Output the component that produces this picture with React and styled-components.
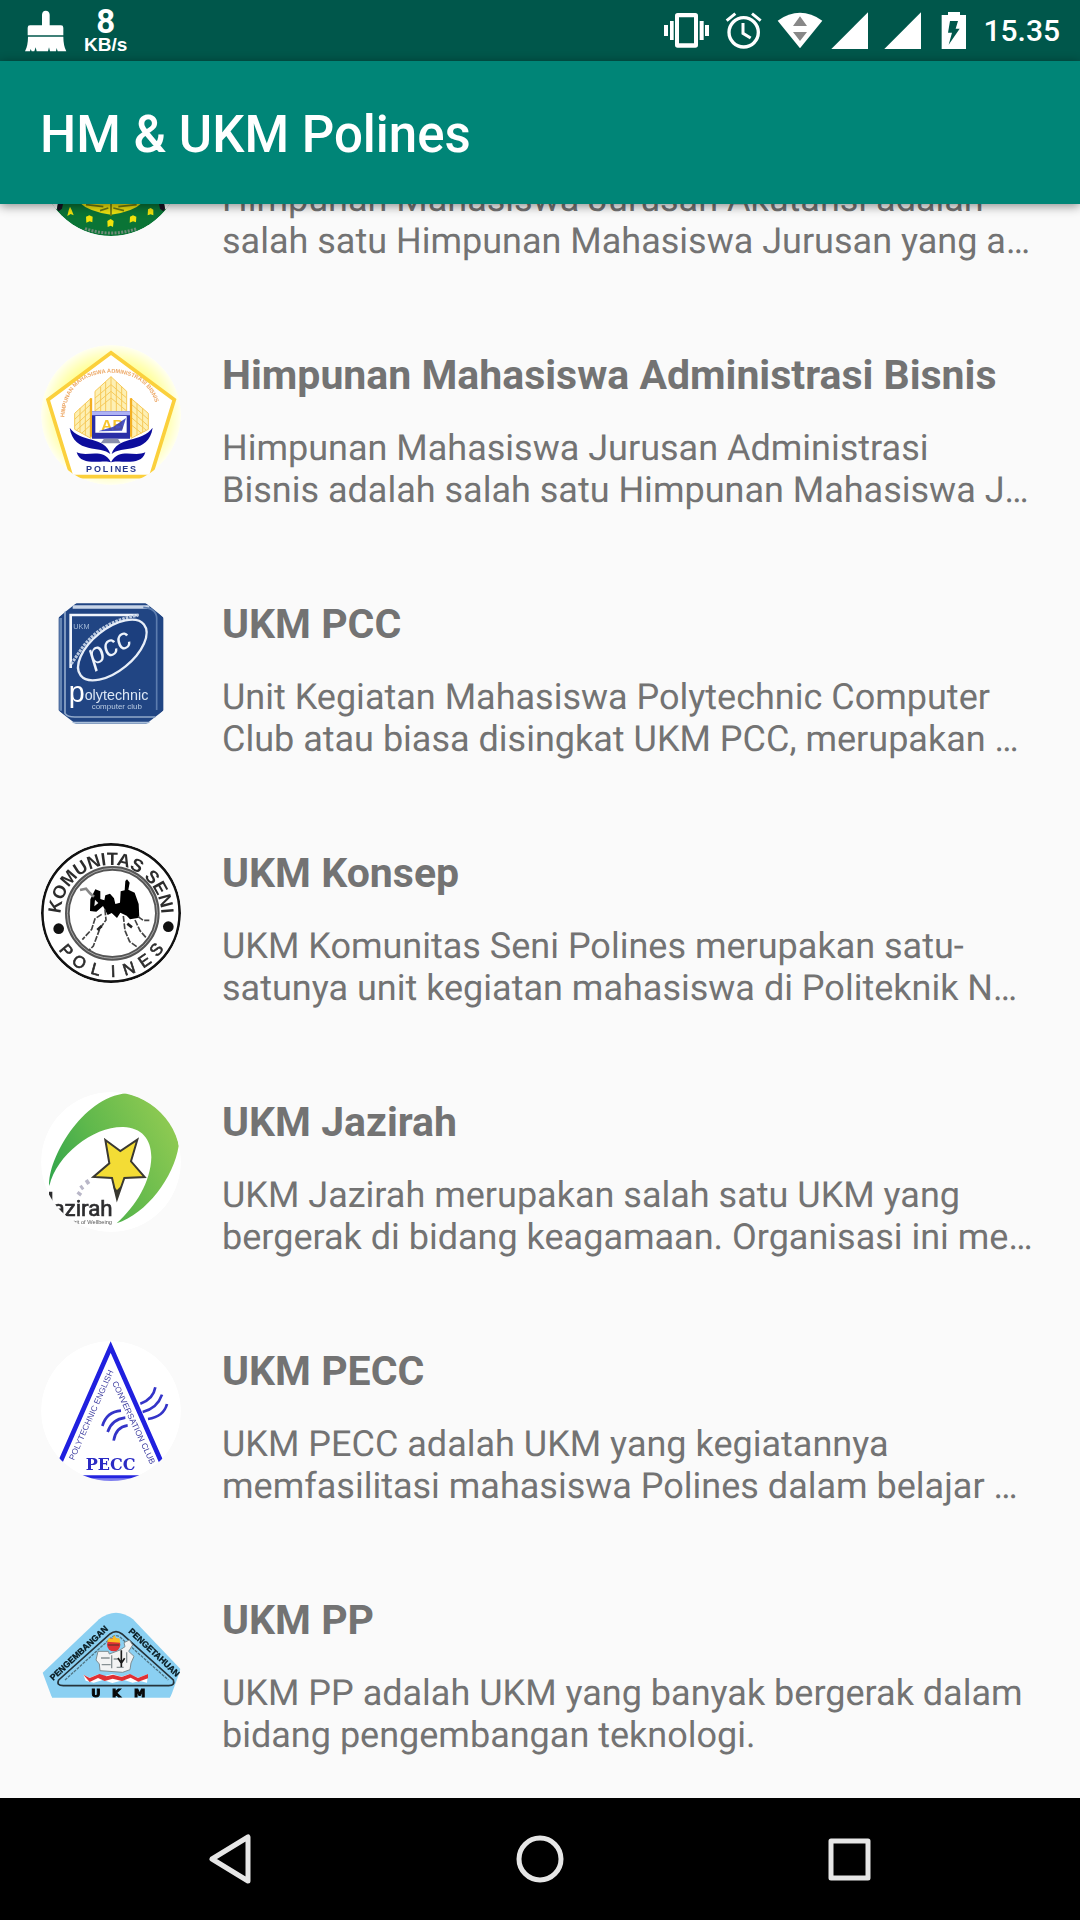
import React from "react";
import styled, { createGlobalStyle } from "styled-components";

const GlobalStyle = createGlobalStyle`
  * { box-sizing: border-box; }
  body {
    margin: 0;
    background: #fafafa;
    font-family: Roboto, "Noto Sans", sans-serif;
  }
`;

const Screen = styled.div`
  display: flex;
  flex-direction: column;
  height: 100vh;
`;

const StatusBar = styled.div`
  display: flex;
  flex: none;
  align-items: center;
  justify-content: space-between;
  height: 61px;
  padding: 0 20px 0 24px;
  background: #00574b;
  color: #fff;
`;

const StatusGroup = styled.div`
  display: flex;
  align-items: center;
  gap: ${(p) => p.$gap}px;
`;

const StatusIcon = styled.svg`
  display: block;
  width: ${(p) => p.$width}px;
  height: 61px;
  fill: #fff;
`;

const NetSpeed = styled.div`
  display: flex;
  flex-direction: column;
  align-items: center;
`;

const SpeedValue = styled.span`
  font-size: 33px;
  font-weight: 700;
  line-height: 28px;
`;

const SpeedUnit = styled.span`
  font-family: "Liberation Sans", sans-serif;
  font-size: 19px;
  font-weight: 700;
  line-height: 18px;
`;

const Clock = styled.time`
  font-size: 30px;
  font-weight: 500;
  line-height: 42px;
`;

const AppBar = styled.header`
  display: flex;
  flex: none;
  align-items: center;
  height: 143px;
  padding: 4px 40px 0;
  background: #008577;
  color: #fff;
  box-shadow: 0 2px 10px rgba(0, 0, 0, 0.45);
  z-index: 1;
`;

const AppTitle = styled.h1`
  margin: 0;
  font-size: 51px;
  font-weight: 500;
  line-height: 60px;
`;

const Viewport = styled.main`
  display: flex;
  flex: 1;
  flex-direction: column;
  justify-content: flex-end;
  min-height: 0;
  overflow: hidden;
`;

const List = styled.ul`
  flex: none;
  margin: 0;
  padding: 0;
  list-style: none;
`;

const Row = styled.li`
  display: flex;
  gap: 41px;
  min-height: 249px;
  padding: 41px 41px 42px;
`;

const Avatar = styled.svg`
  flex: none;
  width: 140px;
  height: 140px;
  border-radius: 50%;
  filter: blur(0.6px);
`;

const RowText = styled.div`
  display: flex;
  flex: 1;
  flex-direction: column;
  justify-content: flex-end;
  gap: 22px;
  min-width: 0;
  color: #737373;
`;

const RowTitle = styled.h2`
  margin: 0;
  font-size: 41px;
  font-weight: 700;
  line-height: 60px;
`;

const RowBody = styled.p`
  margin: 0;
  font-size: 36px;
  line-height: 42px;
  text-rendering: geometricPrecision;
  white-space: pre-line;
`;

const NavBar = styled.nav`
  display: flex;
  flex: none;
  height: 122px;
  padding: 0 75px;
  background: #000;
`;

const NavButton = styled.button`
  display: flex;
  flex: 1;
  align-items: center;
  justify-content: center;
  padding: 0;
  border: 0;
  background: transparent;
`;

const NavIcon = styled.svg`
  width: 56px;
  height: 56px;
  fill: none;
  stroke: #e6e6e6;
  stroke-width: 5;
  stroke-linejoin: round;
`;

function AkuntansiLogo() {
  return (
    <Avatar viewBox="-27 -300 420 420" aria-hidden="true">
      <circle cx="183" cy="-90" r="210" fill="#0a7436" />
      <path d="M-27 0 H28 L21 38 L-10 48 Z M393 0 H338 L345 38 L376 48 Z" fill="#fafafa" />
      <path d="M28 0 H44 L36 38 L26 46 L21 38 Z M338 0 H322 L330 38 L340 46 L345 38 Z" fill="#1a1022" />
      <path d="M72 0 Q100 46 183 56 Q266 46 294 0 Z" fill="#e9e010" />
      <path d="M108 26 L160 32 M205 32 L260 26 M150 44 L175 36 M190 36 L222 44 M183 24 V60" stroke="#6d7a12" strokeWidth="5" />
      <g fill="#f0e30c">
        <path d="M60 32 l5 10 6 16 -9 -4 -10 6 4 -17z" />
        <path d="M108 62 l10 -4 10 4 -1 17 -8 -3 -10 4z" />
        <path d="M172 75 l10 -6 9 6 -2 18 -7 -4 -9 4z" />
        <path d="M240 62 l9 -4 10 4 -1 17 -9 -3 -10 4z" />
        <path d="M294 40 l8 -4 8 5 0 17 -8 -3 -9 3z" />
      </g>
      <path d="M105 98 Q183 124 261 98" fill="none" stroke="#6f8a78" strokeWidth="9" strokeDasharray="6 4" />
    </Avatar>
  );
}

function BisnisLogo() {
  return (
    <Avatar viewBox="33 45 420 420" aria-hidden="true">
      <defs>
        <radialGradient id="bisnisGlow">
          <stop offset="0.75" stopColor="#ffff9c" />
          <stop offset="1" stopColor="#fffff0" />
        </radialGradient>
        <path id="bisnisArc" d="M103 262 Q112 132 243 128 Q374 132 386 268" />
      </defs>
      <circle cx="243" cy="255" r="210" fill="url(#bisnisGlow)" />
      <path d="M243 68 L433 209 L362 440 H125 L54 209 Z" fill="#fff" stroke="#fbd03c" strokeWidth="11" />
      <text fontFamily="Liberation Sans, sans-serif" fontSize="17" fontWeight="700" fill="#eda866">
        <textPath href="#bisnisArc">HIMPUNAN MAHASISWA ADMINISTRASI BISNIS</textPath>
      </text>
      <g fill="#fdf0b4" stroke="#f6c95a" strokeWidth="3">
        <path d="M243 140 L290 184 V245 H195 V184 Z" />
        <path d="M183 205 V325 L134 298 V250 Z" />
        <path d="M303 205 V325 L355 298 V250 Z" />
        <path d="M243 140 V245 M195 204 L243 164 L290 204 M195 224 L243 184 L290 224 M195 243 L243 204 L290 243 M212 170 V245 M227 156 V245 M259 156 V245 M275 170 V245" />
        <path d="M134 268 L183 222 M134 288 L183 242 M140 300 L183 262 M155 310 L183 284 M150 234 V306 M166 220 V316 M355 268 L303 222 M355 288 L303 242 M348 300 L303 262 M335 310 L303 284 M338 234 V306 M321 220 V316" />
      </g>
      <path d="M183 205 V320 M303 205 V320" stroke="#f3b024" strokeWidth="7" />
      <path d="M186 244 H300 V326 H186 Z" fill="#2a2ea6" />
      <path d="M186 244 H300 V256 H186 Z" fill="#aeb2f5" />
      <path d="M196 258 H290 V308 H196 Z" fill="#fff" />
      <text x="214" y="301" fontFamily="Liberation Sans, sans-serif" fontSize="46" fontWeight="700" fill="#f7c52c">AB</text>
      <path d="M205 304 L250 290 L288 264 L276 302 Z" fill="#2a35b8" opacity="0.85" />
      <path d="M222 326 H264 L272 340 H212 Z" fill="#8a8fac" />
      <g fill="#0d0d9c">
        <path d="M119 293 C150 338 226 318 241 372 C215 346 132 374 119 293 Z" />
        <path d="M368 293 C336 338 260 318 245 372 C271 346 356 374 368 293 Z" />
        <path d="M140 367 C172 382 220 352 243 397 C220 388 152 412 140 367 Z" />
        <path d="M346 367 C314 382 266 352 243 397 C266 388 334 412 346 367 Z" />
      </g>
      <text x="168 192 218 241 254 277 300" y="426" fontFamily="Liberation Sans, sans-serif" fontSize="27" fontWeight="700" fill="#24368c">POLINES</text>
    </Avatar>
  );
}

function PccLogo() {
  return (
    <Avatar viewBox="33 42 420 420" aria-hidden="true">
      <path d="M138 70 H348 L400 112 V392 L348 432 H138 L86 392 V112 Z" fill="#214583" />
      <path d="M128 81 H358" stroke="#c8d5e8" strokeWidth="10" />
      <path d="M92 114 V392" stroke="#6686b3" strokeWidth="8" />
      <path d="M105 92 V400 Q112 411 134 411 H376" fill="none" stroke="#91a9ca" strokeWidth="5" />
      <path d="M340 82 Q379 85 380 114 V390" fill="none" stroke="#5c7cae" strokeWidth="5" />
      <path d="M125 428 H360" stroke="#aabfd9" strokeWidth="6" />
      <path d="M122 264 V105 H326" fill="none" stroke="#f2f6fc" strokeWidth="8" />
      <path d="M124 252 L154 207 Q212 124 324 106" fill="none" stroke="#bac9df" strokeWidth="9" strokeDasharray="8 3" />
      <ellipse cx="247" cy="210" rx="122" ry="63" transform="rotate(-39 247 210)" fill="#1c3f7e" stroke="#e7eef8" strokeWidth="7" />
      <text x="190" y="258" transform="rotate(-28 190 258)" fontFamily="Liberation Sans, sans-serif" fontSize="88" fontStyle="italic" fill="#edf3fb">pcc</text>
      <text x="130" y="148" fontFamily="Liberation Sans, sans-serif" fontSize="22" fill="#a5bbd8">UKM</text>
      <text x="116" y="366" fontFamily="Liberation Sans, sans-serif" fontSize="86" fill="#fff">p</text>
      <text x="164" y="361" fontFamily="Liberation Sans, sans-serif" fontSize="43" fill="#dce7f5">olytechnic</text>
      <text x="185" y="388" fontFamily="Liberation Sans, sans-serif" fontSize="24" fill="#b8cae1">computer club</text>
    </Avatar>
  );
}

const konsepBottomLetters = [
  ["P", 50],
  ["O", 33],
  ["L", 15],
  ["I", -2],
  ["N", -18],
  ["E", -35],
  ["S", -51],
];

function KonsepLogo() {
  return (
    <Avatar viewBox="33 39 420 420" aria-hidden="true">
      <defs>
        <path id="konsepTop" d="M92 256 A151 151 0 1 1 394 256" />
      </defs>
      <circle cx="243" cy="249" r="206" fill="#fff" stroke="#111" strokeWidth="8" />
      <circle cx="247" cy="250" r="135" fill="none" stroke="#555" strokeWidth="14" />
      <circle cx="247" cy="250" r="135" fill="none" stroke="#aaa" strokeWidth="3" />
      <g fontFamily="Liberation Sans, sans-serif" fill="#2c2c2c" textAnchor="middle">
        <text fontSize="54" fontWeight="700"><textPath href="#konsepTop" startOffset="50%">KOMUNITAS SENI</textPath></text>
        {konsepBottomLetters.map(([letter, angle]) => (
          <text key={letter} x="243" y="441" fontSize="50" stroke="#2c2c2c" strokeWidth="2" transform={`rotate(${angle} 243 249)`}>
            {letter}
          </text>
        ))}
      </g>
      <circle cx="86" cy="296" r="16" fill="#111" />
      <circle cx="415" cy="290" r="16" fill="#111" />
      <path d="M181 208 L196 178 L211 184 L211 207 L223 211 L226 196 L240 191 L252 205 L256 222 L270 218 L272 184 L284 181 L286 153 L291 148 L299 158 L295 179 L314 188 L326 222 L328 263 L300 268 L290 257 L271 248 L261 264 L245 249 L233 255 L219 228 L199 245 L180 243 Z" fill="#000" />
      <path d="M195 209 L205 219 L193 229 Z" fill="#eee" />
      <path d="M225 238 L228 270 L210 295 L190 348 L176 362 M215 253 L195 266 L185 298 L157 329 M280 258 L285 302 L299 335 L320 350 M315 270 L330 302 L350 325 M324 260 L340 271 H358" fill="none" stroke="#444" strokeWidth="5" strokeDasharray="18 4" />
      <path d="M215 288 L202 300 M292 281 L306 292" stroke="#222" strokeWidth="8" />
      <path d="M150 180 L168 176 L180 190 L192 200" fill="none" stroke="#888" strokeWidth="8" />
    </Avatar>
  );
}

function JazirahLogo() {
  return (
    <Avatar viewBox="33 36 420 420" aria-hidden="true">
      <defs>
        <linearGradient id="jazirahLeaf" x1="55" y1="320" x2="430" y2="130" gradientUnits="userSpaceOnUse">
          <stop offset="0" stopColor="#2fa44c" />
          <stop offset="0.45" stopColor="#5fb84c" />
          <stop offset="1" stopColor="#8fca52" />
        </linearGradient>
      </defs>
      <circle cx="243" cy="246" r="210" fill="#fff" />
      <path d="M58 318 C52 240 155 52 290 40 C350 52 438 112 446 198 C432 290 350 402 260 430 C318 378 362 306 364 232 C364 176 334 143 280 141 C190 139 80 224 58 318 Z" fill="url(#jazirahLeaf)" />
      <path d="M226 180 L271 213 L322 179 L303 244 L344 291 L283 294 L261 357 L246 294 L190 291 L238 250 Z" fill="#f3dc35" stroke="#3a3932" strokeWidth="6" />
      <path d="M249 318 L261 357 L273 318 L261 330 Z" fill="#38372f" />
      <path d="M145 345 L151 337 M152 325 L159 320 M168 309 L177 303" stroke="#b9b7c8" strokeWidth="14" />
      <path d="M62 335 V362" stroke="#2d2d2f" strokeWidth="10" />
      <text x="248" y="409" textAnchor="end" fontFamily="Roboto, sans-serif" fontSize="67" fill="#2d2d2f" stroke="#2d2d2f" strokeWidth="2">azirah</text>
      <text x="246" y="433" textAnchor="end" fontFamily="Liberation Sans, sans-serif" fontSize="17" fill="#555">Spirit of Wellbeing</text>
    </Avatar>
  );
}

function PeccLogo() {
  return (
    <Avatar viewBox="33 33 420 420" aria-hidden="true">
      <circle cx="243" cy="243" r="210" fill="#fff" />
      <path d="M91 396 L242 51 L394 396" fill="none" stroke="#2020df" strokeWidth="14" />
      <g fontFamily="Liberation Sans, sans-serif" fontSize="25" fill="#4242a2">
        <text x="132" y="392" transform="rotate(-66 132 392)">POLYTECHNIC ENGLISH</text>
        <text x="246" y="158" transform="rotate(65 246 158)">CONVERSATION CLUB</text>
      </g>
      <g fill="none" stroke="#3434c8" strokeWidth="8">
        <path d="M217 288 Q230 245 273 242 M233 306 Q245 268 286 263 M251 332 Q257 291 293 286" />
        <path d="M331 221 Q370 208 376 172 M338 246 Q382 235 396 194 M354 267 Q401 260 411 222" />
      </g>
      <text x="242" y="421" textAnchor="middle" fontFamily="DejaVu Serif, serif" fontSize="48" fontWeight="700" fill="#2b2bc4">PECC</text>
      <path d="M140 441 H346" stroke="#2424df" strokeWidth="11" />
      <path d="M140 450 H346" stroke="#8080ee" strokeWidth="9" />
    </Avatar>
  );
}

function PpLogo() {
  return (
    <Avatar viewBox="33 0 420 420" aria-hidden="true">
      <path d="M38 248 L207 88 Q232 68 258 68 Q284 68 309 88 L452 238 L421 323 H66 Z" fill="#8bd0f2" />
      <path d="M86 270 L240 132 Q258 118 276 132 L430 270 Q436 287 416 287 H100 Q78 287 86 270 Z" fill="none" stroke="#26343b" strokeWidth="5" />
      <path d="M105 270 L245 142 Q258 132 271 142 L415 270" fill="none" stroke="#517583" strokeWidth="4" strokeDasharray="9 3" />
      <g fontFamily="Liberation Sans, sans-serif" fontWeight="700" fontSize="26" fill="#06181e" stroke="#06181e" strokeWidth="1">
        <text x="70" y="273" transform="rotate(-43 70 273)">PENGEMBANGAN</text>
        <text x="294" y="126" transform="rotate(43 294 126)">PENGETAHUAN</text>
      </g>
      <path d="M204 184 L235 184 L238 192 L270 180 L285 170 L282 158 L298 150 L308 165 L296 184 L312 199 L303 219 L300 239 L278 247 L210 242 L208 222 L198 210 Z" fill="#f3f3f3" stroke="#7e8c91" strokeWidth="3" />
      <path d="M213 204 H239 M245 196 V235 M215 224 H242 M251 207 H267 M260 232 H281 M290 187 V218" stroke="#879093" strokeWidth="4" />
      <path d="M274 181 V231 M264 204 L274 220 L284 205" fill="none" stroke="#1a1a1a" strokeWidth="5" />
      <circle cx="251" cy="164" r="20" fill="#df3034" />
      <path d="M231 155 L237 144 L247 147 L252 135 L259 145 L268 145 L271 158 Z" fill="#fbbb22" />
      <path d="M234 165 H268" stroke="#77302d" strokeWidth="5" />
      <path d="M160 254 L179 263 L205 253 L223 259 L247 252 L275 260 L298 252 L325 263 L354 252 L351 278 L329 273 L308 278 L282 270 L247 279 L219 270 L191 278 L167 272 Z" fill="#fff" />
      <path d="M160 254 L179 264 L208 252 L230 259 L249 254 L275 261 L300 252 L324 264 L354 252 V265 L325 275 L302 263 L276 273 L248 266 L224 273 L204 264 L179 276 Z" fill="#df3034" />
      <text x="184 246 312" y="321" fontFamily="DejaVu Sans, sans-serif" fontSize="34" fontWeight="700" fill="#080808" stroke="#080808" strokeWidth="3">UKM</text>
    </Avatar>
  );
}

const organisations = [
  {
    id: "akuntansi",
    body: "Himpunan Mahasiswa Jurusan Akutansi adalah\nsalah satu Himpunan Mahasiswa Jurusan yang a…",
    Logo: AkuntansiLogo,
  },
  {
    id: "bisnis",
    name: "Himpunan Mahasiswa Administrasi Bisnis",
    body: "Himpunan Mahasiswa Jurusan Administrasi\nBisnis adalah salah satu Himpunan Mahasiswa J…",
    Logo: BisnisLogo,
  },
  {
    id: "pcc",
    name: "UKM PCC",
    body: "Unit Kegiatan Mahasiswa Polytechnic Computer\nClub atau biasa disingkat UKM PCC, merupakan …",
    Logo: PccLogo,
  },
  {
    id: "konsep",
    name: "UKM Konsep",
    body: "UKM Komunitas Seni Polines merupakan satu-\nsatunya unit kegiatan mahasiswa di Politeknik N…",
    Logo: KonsepLogo,
  },
  {
    id: "jazirah",
    name: "UKM Jazirah",
    body: "UKM Jazirah merupakan salah satu UKM yang\nbergerak di bidang keagamaan. Organisasi ini me…",
    Logo: JazirahLogo,
  },
  {
    id: "pecc",
    name: "UKM PECC",
    body: "UKM PECC adalah UKM yang kegiatannya\nmemfasilitasi mahasiswa Polines dalam belajar …",
    Logo: PeccLogo,
  },
  {
    id: "pp",
    name: "UKM PP",
    body: "UKM PP adalah UKM yang banyak bergerak dalam\nbidang pengembangan teknologi.",
    Logo: PpLogo,
  },
];

function SignalIcon() {
  return (
    <StatusIcon $width={45} viewBox="573 0 135 183" aria-hidden="true">
      <path d="M574 147 L684 37 V147 Z" />
    </StatusIcon>
  );
}

function StatusIcons() {
  return (
    <StatusGroup $gap={8}>
      <StatusIcon $width={53} viewBox="60 0 159 183" aria-hidden="true">
        <path fillRule="evenodd" d="M113 39 H166 Q174 39 174 47 V135 Q174 143 166 143 H113 Q105 143 105 135 V47 Q105 39 113 39 Z M117 52 V130 H162 V52 Z" />
        <path d="M72 75 H84 V108 H72 Z M90 63 H101 V120 H90 Z M179 63 H191 V120 H179 Z M195 75 H207 V108 H195 Z" />
      </StatusIcon>
      <StatusIcon $width={45} viewBox="243 0 135 183" aria-hidden="true">
        <circle cx="311" cy="97" r="44" fill="none" stroke="#fff" strokeWidth="10" />
        <path d="M309 69 V100 L332 114 M260 62 L286 41 M362 62 L336 41" fill="none" stroke="#fff" strokeWidth="9" />
      </StatusIcon>
      <StatusIcon $width={49} viewBox="402 0 147 183" aria-hidden="true">
        <path d="M413 62 Q480 15 547 62 L480 145 Z" />
        <path d="M459 78 L480 49 L501 78 Z M459 96 H501 L480 123 Z" fill="#888" />
      </StatusIcon>
      <SignalIcon />
      <SignalIcon />
      <StatusIcon $width={38} viewBox="891 0 114 183" aria-hidden="true">
        <path d="M924 36 H960 V45 H978 V147 H905 V45 H924 Z" />
        <path d="M930 63 H954 L947 86 H959 L926 134 L936 98 H924 Z" fill="#00574b" />
      </StatusIcon>
      <Clock>15.35</Clock>
    </StatusGroup>
  );
}

export default function App() {
  return (
    <Screen>
      <GlobalStyle />
      <StatusBar>
        <StatusGroup $gap={17}>
          <StatusIcon $width={43} viewBox="27 0 129 183" aria-hidden="true">
            <path d="M81 76 V44 Q82 32 92 32 Q103 32 104 44 V76 H138 Q145 76 145 83 V106 H38 V83 Q38 76 45 76 Z" />
            <path d="M39 110 H145 Q145 137 154 154 H128 L125 144 L123 154 H105 L102 142 L99 154 H65 L62 142 L58 154 H50 L47 147 L45 154 H30 Q39 137 39 110 Z" />
          </StatusIcon>
          <NetSpeed>
            <SpeedValue>8</SpeedValue>
            <SpeedUnit>KB/s</SpeedUnit>
          </NetSpeed>
        </StatusGroup>
        <StatusIcons />
      </StatusBar>
      <AppBar>
        <AppTitle>HM &amp; UKM Polines</AppTitle>
      </AppBar>
      <Viewport>
        <List>
          {organisations.map(({ id, name, body, Logo }) => (
            <Row key={id}>
              <Logo />
              <RowText>
                {name && <RowTitle>{name}</RowTitle>}
                <RowBody>{body}</RowBody>
              </RowText>
            </Row>
          ))}
        </List>
      </Viewport>
      <NavBar aria-label="System">
        <NavButton type="button" aria-label="Back">
          <NavIcon viewBox="0 0 56 56" aria-hidden="true">
            <path d="M10 28 L46 6 V50 Z" />
          </NavIcon>
        </NavButton>
        <NavButton type="button" aria-label="Home">
          <NavIcon viewBox="0 0 56 56" aria-hidden="true">
            <circle cx="28" cy="28" r="21" />
          </NavIcon>
        </NavButton>
        <NavButton type="button" aria-label="Recent apps">
          <NavIcon viewBox="0 0 56 56" aria-hidden="true">
            <rect x="9" y="10" width="37" height="37" />
          </NavIcon>
        </NavButton>
      </NavBar>
    </Screen>
  );
}
